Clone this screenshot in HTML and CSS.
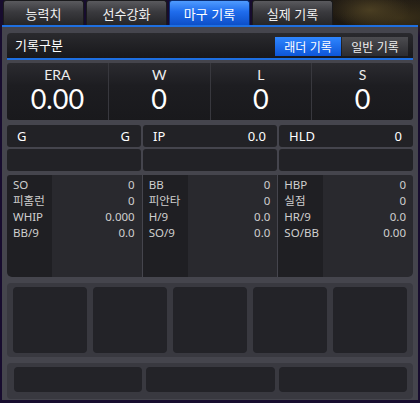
FILE: index.html
```html
<!DOCTYPE html>
<html lang="ko">
<head>
<meta charset="utf-8">
<link rel="stylesheet" href="styles.css">
</head>
<body>
<div class="frame">
  <div class="tabs">
    <div class="tab">능력치</div>
    <div class="tab">선수강화</div>
    <div class="tab active">마구 기록</div>
    <div class="tab">실제 기록</div>
  </div>
  <div class="panel">
    <div class="header">
      <div class="title">기록구분</div>
      <div class="toggle">
        <div class="tbtn on">래더 기록</div>
        <div class="tbtn">일반 기록</div>
      </div>
    </div>
    <div class="stats">
      <div class="stat"><div class="sl">ERA</div><div class="sv">0.00</div></div>
      <div class="stat"><div class="sl">W</div><div class="sv">0</div></div>
      <div class="stat"><div class="sl">L</div><div class="sv">0</div></div>
      <div class="stat"><div class="sl">S</div><div class="sv">0</div></div>
    </div>
    <div class="row3">
      <div class="cell"><span>G</span><span>G</span></div>
      <div class="cell"><span>IP</span><span>0.0</span></div>
      <div class="cell"><span>HLD</span><span>0</span></div>
    </div>
    <div class="row3 empty">
      <div class="cell"></div>
      <div class="cell"></div>
      <div class="cell"></div>
    </div>
    <div class="detail">
      <div class="dcol">
        <div class="dlab"><div>SO</div><div>피홈런</div><div>WHIP</div><div>BB/9</div></div>
        <div class="dval"><div>0</div><div>0</div><div>0.000</div><div>0.0</div></div>
      </div>
      <div class="dcol">
        <div class="dlab"><div>BB</div><div>피안타</div><div>H/9</div><div>SO/9</div></div>
        <div class="dval"><div>0</div><div>0</div><div>0.0</div><div>0.0</div></div>
      </div>
      <div class="dcol">
        <div class="dlab"><div>HBP</div><div>실점</div><div>HR/9</div><div>SO/BB</div></div>
        <div class="dval"><div>0</div><div>0</div><div>0.0</div><div>0.00</div></div>
      </div>
    </div>
    <div class="slots5">
      <div class="slot"></div><div class="slot"></div><div class="slot"></div><div class="slot"></div><div class="slot"></div>
    </div>
    <div class="slots3">
      <div class="slot"></div><div class="slot"></div><div class="slot"></div>
    </div>
  </div>
</div>
</body>
</html>
```

FILE: styles.css
```css
* { box-sizing: border-box; }
html, body { margin: 0; padding: 0; }
body {
  width: 420px;
  height: 403px;
  overflow: hidden;
  background: #170c2e;
  font-family: "Noto Sans", "Noto Sans CJK KR", sans-serif;
  color: #fff;
}
.frame {
  width: 420px;
  height: 403px;
  padding: 0 2px 0 2px;
  display: flex;
  flex-direction: column;
  background:
    radial-gradient(ellipse 40px 18px at 370px 10px, #4a3e22 0%, rgba(40,32,18,0) 100%),
    radial-gradient(ellipse 60px 20px at 400px 18px, #3a3019 0%, rgba(30,25,15,0) 100%),
    linear-gradient(#221c14, #1c1710) right top / 90px 26px no-repeat,
    #170c2e;
}
.tabs {
  display: flex;
  gap: 2px;
  height: 27px;
  border-bottom: 2px solid #1e6fe0;
  padding-left: 1px;
}
.tab {
  width: 81px;
  height: 25px;
  display: flex;
  align-items: center;
  justify-content: center;
  font-family: "Noto Sans CJK KR", sans-serif;
  font-size: 13px;
  color: #f2f2f2;
  background: linear-gradient(#5a5a5e 0%, #3a3a3e 45%, #262628 100%);
  border-radius: 3px 3px 0 0;
  border: 1px solid #1a1a1c;
  border-bottom: none;
}
.tab.active {
  color: #fff;
  background: linear-gradient(#4f9bff 0%, #1f6cec 45%, #0d4fc8 100%);
  border-color: #0a2c70;
}
.panel {
  width: 416px;
  height: 373px;
  background: #45454d;
  padding: 6px 5px 0 5px;
  display: flex;
  flex-direction: column;
}
.header {
  height: 27px;
  background: linear-gradient(#2a2a2e, #18181b);
  border-radius: 4px 4px 0 0;
  border-bottom: 2px solid #1e6fe0;
  display: flex;
  align-items: center;
  justify-content: space-between;
  padding: 0 5px 0 8px;
}
.title {
  font-family: "Noto Sans CJK KR", sans-serif;
  font-size: 13px;
  color: #fff;
  margin-top: -2px;
}
.toggle {
  display: flex;
  gap: 1px;
  margin-top: 2px;
}
.tbtn {
  width: 66px;
  height: 19px;
  display: flex;
  align-items: center;
  justify-content: center;
  font-family: "Noto Sans CJK KR", sans-serif;
  font-size: 12px;
  color: #eee;
  background: linear-gradient(#4c4c50, #2c2c30);
}
.tbtn.on {
  color: #fff;
  background: linear-gradient(#2f86ff, #0d56d8);
}
.stats {
  margin-top: 3px;
  height: 57px;
  display: flex;
  background: linear-gradient(#2b2b30 0%, #1d1d21 40%, #19191c 100%);
  border-radius: 3px;
}
.stat {
  flex: 1;
  display: flex;
  flex-direction: column;
  align-items: center;
  border-left: 1px solid #38383e;
  font-family: Lato, "Noto Sans", sans-serif;
}
.stat:first-child { border-left: none; }
.sl {
  font-size: 14px;
  line-height: 16px;
  margin-top: 4px;
  color: #eee;
}
.sv {
  font-size: 27px;
  line-height: 31px;
  margin-top: 0;
  color: #fff;
}
.row3 {
  margin-top: 5px;
  height: 22px;
  display: flex;
  gap: 2px;
}
.row3.empty { margin-top: 2px; }
.cell {
  flex: 1;
  background: #222226;
  border-radius: 3px;
  display: flex;
  align-items: center;
  justify-content: space-between;
  padding: 0 11px 0 10px;
  font-size: 13px;
  color: #fff;
}
.detail {
  margin-top: 4px;
  height: 102px;
  display: flex;
  gap: 1px;
  background: #45454d;
}
.dcol {
  flex: 1;
  display: flex;
  overflow: hidden;
}
.dcol:first-child { border-radius: 3px 0 0 5px; }
.dcol:last-child { border-radius: 0 3px 5px 0; }
.dlab {
  width: 45px;
  background: #1f1f23;
  padding: 2px 0 0 6px;
  font-size: 11.5px;
  line-height: 16px;
  color: #cfcfcf;
}
.dval {
  flex: 1;
  background: #29292e;
  padding: 2px 7px 0 0;
  text-align: right;
  font-size: 11.5px;
  line-height: 16px;
  color: #cfcfcf;
}
.slots5 {
  margin-top: 6px;
  height: 74px;
  background: #393940;
  border-radius: 4px;
  padding: 4px 6px;
  display: flex;
  gap: 6px;
}
.slots3 {
  margin-top: 6px;
  height: 36px;
  background: #393940;
  border-radius: 4px;
  padding: 4px 6px 7px 7px;
  display: flex;
  gap: 4px;
}
.slot {
  flex: 1;
  background: #232328;
  border-radius: 4px;
}
```
